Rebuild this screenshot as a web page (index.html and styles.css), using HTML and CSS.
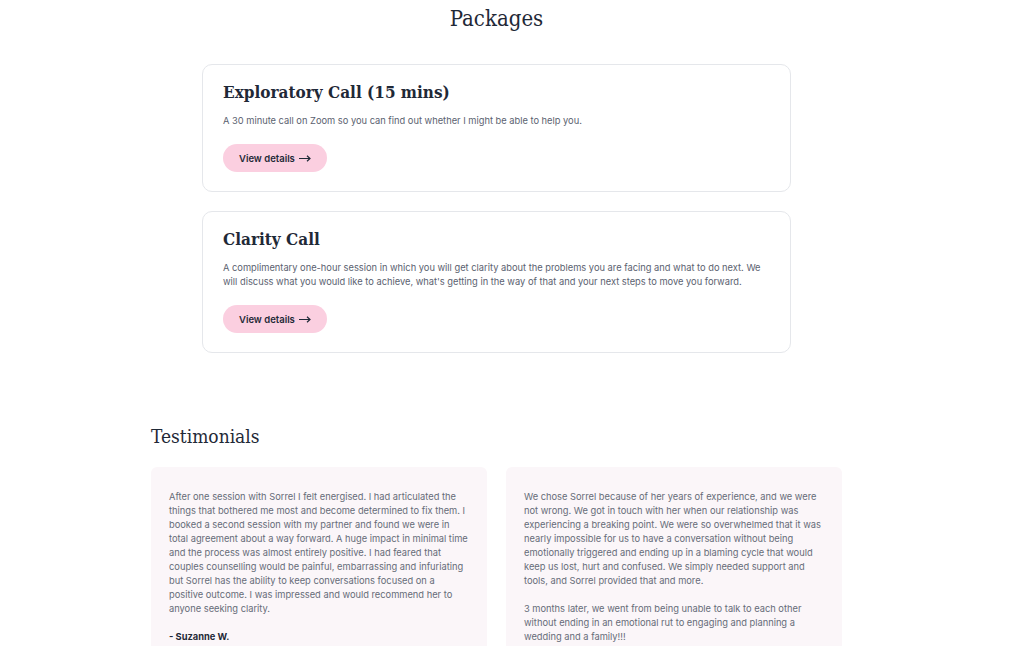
FILE: index.html
```html
<!DOCTYPE html>
<html lang="en">
<head>
  <meta charset="UTF-8" />
  <meta name="viewport" content="width=device-width, initial-scale=1.0"/>
  <title>Packages</title>
  <link rel="stylesheet" href="styles.css">
</head>
<body>

  <section class="packages">
    <h2 class="section-title center">Packages</h2>

    <div class="package-list">
      <div class="package-card">
        <h3>Exploratory Call (15 mins)</h3>
        <p>A 30 minute call on Zoom so you can find out whether I might be able to help you.</p>
        <a href="#" class="btn">View details
          <svg class="arrow" width="12" height="7" viewBox="0 0 12 7"><path d="M0 3.5h11M8 0.8l3 2.7-3 2.7" fill="none" stroke="currentColor" stroke-width="1.2"/></svg>
        </a>
      </div>

      <div class="package-card">
        <h3>Clarity Call</h3>
        <p>A complimentary one-hour session in which you will get clarity about the problems you are facing and what to do next. We will discuss what you would like to achieve, what's getting in the way of that and your next steps to move you forward.</p>
        <a href="#" class="btn">View details
          <svg class="arrow" width="12" height="7" viewBox="0 0 12 7"><path d="M0 3.5h11M8 0.8l3 2.7-3 2.7" fill="none" stroke="currentColor" stroke-width="1.2"/></svg>
        </a>
      </div>
    </div>
  </section>

  <section class="testimonials">
    <h2 class="section-title">Testimonials</h2>

    <div class="testimonial-grid">
      <div class="testimonial">
        <p>After one session with Sorrel I felt energised. I had articulated the things that bothered me most and become determined to fix them. I booked a second session with my partner and found we were in total agreement about a way forward. A huge impact in minimal time and the process was almost entirely positive. I had feared that couples counselling would be painful, embarrassing and infuriating but Sorrel has the ability to keep conversations focused on a positive outcome. I was impressed and would recommend her to anyone seeking clarity.</p>
        <p class="author">- Suzanne W.</p>
      </div>

      <div class="testimonial">
        <p>We chose Sorrel because of her years of experience, and we were not wrong. We got in touch with her when our relationship was experiencing a breaking point. We were so overwhelmed that it was nearly impossible for us to have a conversation without being emotionally triggered and ending up in a blaming cycle that would keep us lost, hurt and confused. We simply needed support and tools, and Sorrel provided that and more.</p>
        <p>3 months later, we went from being unable to talk to each other without ending in an emotional rut to engaging and planning a wedding and a family!!!</p>
      </div>
    </div>
  </section>

</body>
</html>
```

FILE: styles.css
```css
body {
  margin: 0;
  font-family: Inter, "Noto Sans", sans-serif;
  background: #ffffff;
  color: #5b6270;
}

.section-title {
  font-family: "DejaVu Serif Condensed", "DejaVu Serif", serif;
  font-stretch: condensed;
  font-weight: normal;
  color: #1f2937;
  margin: 0;
}

.packages {
  width: 589px;
  margin-left: 202px;
  padding-top: 4px;
}

.packages .section-title {
  font-size: 22px;
  line-height: 30px;
  text-align: center;
  margin-bottom: 30px;
}

.package-list {
  display: flex;
  flex-direction: column;
  gap: 19px;
}

.package-card {
  border: 1px solid #e5e7eb;
  border-radius: 10px;
  padding: 13px 20px 19px;
}

.package-card h3 {
  font-family: "DejaVu Serif Condensed", "DejaVu Serif", serif;
  font-stretch: condensed;
  font-size: 17px;
  line-height: 28px;
  color: #1f2937;
  margin: 0 0 8px;
}

.package-card p {
  font-size: 9.3px;
  line-height: 14px;
  margin: 0 0 16px;
}

.btn {
  display: inline-flex;
  align-items: center;
  gap: 4px;
  height: 28px;
  padding: 0 16px;
  background: #fbcfe0;
  color: #1f2937;
  border-radius: 14px;
  font-size: 9.5px;
  font-weight: 600;
  text-decoration: none;
}

.btn .arrow {
  display: block;
}

.testimonials {
  width: 691px;
  margin-left: 151px;
  margin-top: 69px;
}

.testimonials .section-title {
  font-size: 19px;
  line-height: 28px;
  margin-bottom: 17px;
}

.testimonial-grid {
  display: grid;
  grid-template-columns: 1fr 1fr;
  gap: 19px;
}

.testimonial {
  background: #fbf6f9;
  border-radius: 6px;
  padding: 23px 18px 20px;
  min-height: 200px;
}

.testimonial p {
  font-size: 9.3px;
  line-height: 14px;
  margin: 0 0 14px;
  color: #666c78;
}

.testimonial .author {
  font-weight: 700;
  color: #1f2937;
}
```
